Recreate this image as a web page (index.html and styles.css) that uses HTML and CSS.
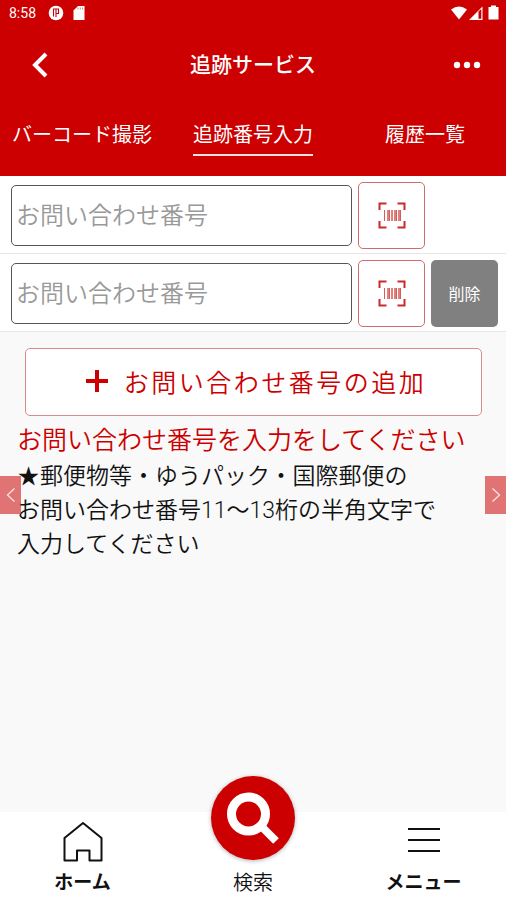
FILE: index.html
```html
<!DOCTYPE html>
<html lang="ja">
<head>
<meta charset="utf-8">
<meta name="viewport" content="width=device-width, initial-scale=1">
<title>追跡サービス</title>
<link rel="stylesheet" href="styles.css">
</head>
<body>
<header class="header">
  <div class="status">
    <span class="status-group">
      <span class="clock">8:58</span>
      <svg class="status-icon" width="16" height="16" viewBox="0 0 16 16" aria-hidden="true">
        <circle cx="8" cy="8" r="7.3" fill="#fff"/>
        <path d="M5.500 4V11.500M5 4H10.500V8.500H8M8 4V12" fill="none" stroke="#c00" stroke-width="1.100"/>
      </svg>
      <svg class="status-icon" width="16" height="16" viewBox="0 0 16 16" aria-hidden="true">
        <path d="M6 1H12.500V15H1.500V5.500Z" fill="#fff"/>
        <path d="M6 2.500V4.500M8.300 2.500V4.500M10.500 2.500V4.500" stroke="#c00" stroke-width=".5"/>
      </svg>
    </span>
    <svg width="48" height="16" viewBox="0 0 48 16" aria-hidden="true">
      <path d="M0 4.500Q8 -1.500 16 4.500L8 14.500Z" fill="#fff"/>
      <path d="M18 15L31.500 1.500V15Z" fill="#fff"/>
      <path d="M27.500 6.500L30.300 4V13.800H27.500Z" fill="#c00"/>
      <path d="M40 .5H45V2H47.500V14.500H37.500V2H40Z" fill="#fff"/>
    </svg>
  </div>
  <div class="titlebar">
    <button class="icon-button" type="button" aria-label="戻る">
      <svg width="18" height="26" viewBox="0 0 18 26" aria-hidden="true"><path d="M16 2L5 13L16 24" fill="none" stroke="#fff" stroke-width="4"/></svg>
    </button>
    <h1 class="title">追跡サービス</h1>
    <button class="icon-button" type="button" aria-label="その他">
      <svg width="28" height="8" viewBox="0 0 28 8" aria-hidden="true"><g fill="#fff"><circle cx="4" cy="4" r="3.200"/><circle cx="14" cy="4" r="3.200"/><circle cx="24" cy="4" r="3.200"/></g></svg>
    </button>
  </div>
  <nav class="tabs">
    <a class="tab" href="#barcode">バーコード撮影</a>
    <a class="tab tab-active" href="#number" aria-current="page">追跡番号入力</a>
    <a class="tab" href="#history">履歴一覧</a>
  </nav>
</header>
<main class="main">
  <form class="form">
    <div class="row">
      <input class="number" type="text" placeholder="お問い合わせ番号" aria-label="お問い合わせ番号">
      <button class="scan" type="button" aria-label="バーコードを読み取る">
        <svg width="28" height="27" viewBox="0 0 28 27" aria-hidden="true">
          <path d="M1.500 8V1.500H8.500M19.500 1.500H26.500V8M26.500 19V25.500H19.500M8.500 25.500H1.500V19" fill="none" stroke="#c92a2a" stroke-width="2"/>
          <path d="M6.500 8V19M11.500 8V19M18.500 8V19M22.500 8V19" stroke="#d65c5c" stroke-width="1"/>
          <path d="M10 8V19M14 8V19M17 8V19M21 8V19" stroke="#e08080" stroke-width="2"/>
        </svg>
      </button>
    </div>
    <div class="row">
      <input class="number" type="text" placeholder="お問い合わせ番号" aria-label="お問い合わせ番号">
      <button class="scan" type="button" aria-label="バーコードを読み取る">
        <svg width="28" height="27" viewBox="0 0 28 27" aria-hidden="true">
          <path d="M1.500 8V1.500H8.500M19.500 1.500H26.500V8M26.500 19V25.500H19.500M8.500 25.500H1.500V19" fill="none" stroke="#c92a2a" stroke-width="2"/>
          <path d="M6.500 8V19M11.500 8V19M18.500 8V19M22.500 8V19" stroke="#d65c5c" stroke-width="1"/>
          <path d="M10 8V19M14 8V19M17 8V19M21 8V19" stroke="#e08080" stroke-width="2"/>
        </svg>
      </button>
      <button class="delete" type="button">削除</button>
    </div>
    <button class="add" type="button">
      <svg width="24" height="24" viewBox="0 0 24 24" aria-hidden="true"><path d="M12 1V23M1 12H23" stroke="#c00" stroke-width="4"/></svg>
      <span class="add-label">お問い合わせ番号の追加</span>
    </button>
  </form>
  <p class="error">お問い合わせ番号を入力をしてください</p>
  <p class="hint"><span class="star">★</span>郵便物等・ゆうパック・国際郵便の<br>お問い合わせ番号11～13桁の半角文字で<br>入力してください</p>
  <button class="pager pager-prev" type="button" aria-label="前へ">
    <svg width="10" height="16" viewBox="0 0 10 16" aria-hidden="true"><path d="M8.500 1.500L1.500 8L8.500 14.500" fill="none" stroke="#fbe3e3" stroke-width="1.300"/></svg>
  </button>
  <button class="pager pager-next" type="button" aria-label="次へ">
    <svg width="10" height="16" viewBox="0 0 10 16" aria-hidden="true"><path d="M1.500 1.500L8.500 8L1.500 14.500" fill="none" stroke="#fbe3e3" stroke-width="1.300"/></svg>
  </button>
</main>
<nav class="bottom">
  <a class="item item-strong" href="#home">
    <svg width="42" height="42" viewBox="0 0 42 42" aria-hidden="true"><path d="M21 2L39.500 17V39.500H27.500V29.500H15V39.500H2.500V17Z" fill="none" stroke="#111" stroke-width="2" stroke-linejoin="round"/></svg>
    <span>ホーム</span>
  </a>
  <a class="item" href="#search">
    <svg class="search" width="86" height="86" viewBox="0 0 86 86" aria-hidden="true">
      <circle cx="43" cy="43" r="42" fill="#c00"/>
      <circle cx="38.500" cy="39" r="17" fill="none" stroke="#fff" stroke-width="9"/>
      <path d="M50 50L66 66" stroke="#fff" stroke-width="8"/>
    </svg>
    <span>検索</span>
  </a>
  <a class="item item-strong" href="#menu">
    <svg width="34" height="42" viewBox="0 0 34 42" aria-hidden="true"><path d="M1 8H33M1 19H33M1 30H33" stroke="#111" stroke-width="2"/></svg>
    <span>メニュー</span>
  </a>
</nav>
</body>
</html>
```
FILE: styles.css
```css
* {
  box-sizing: border-box;
}

body {
  margin: 0;
  min-height: 100vh;
  display: flex;
  flex-direction: column;
  background: #f9f9f9;
  color: #111;
  font-family: Roboto, "Noto Sans CJK JP", sans-serif;
}

button,
input {
  margin: 0;
  padding: 0;
  font-family: inherit;
}

button {
  display: flex;
  align-items: center;
  justify-content: center;
  border: 0;
  background: none;
}

a {
  color: inherit;
  text-decoration: none;
}

svg {
  display: block;
  flex: none;
}

.header {
  display: flex;
  flex-direction: column;
  background: #c00;
  color: #fff;
}

.status {
  height: 28px;
  padding: 0 7px 2px 9px;
  display: flex;
  align-items: center;
  justify-content: space-between;
}

.status-group {
  display: flex;
  align-items: center;
  gap: 8px;
}

.clock {
  margin-right: 4px;
  font-size: 14px;
}

.titlebar {
  height: 74px;
  padding: 0 12px;
  display: flex;
  align-items: center;
  justify-content: space-between;
}

.icon-button {
  width: 54px;
  height: 54px;
}

.title {
  margin: 0;
  font-size: 21px;
  line-height: 30px;
  font-weight: 500;
}

.tabs {
  padding: 18px 12px 20px;
  display: grid;
  grid-template-columns: 1fr auto 1fr;
  align-items: start;
}

.tab {
  justify-self: end;
  height: 36px;
  font-size: 20px;
  line-height: 30px;
}

.tab:first-child {
  justify-self: start;
}

.tab:last-child {
  margin-right: 29px;
}

.tab-active {
  border-bottom: 2px solid #fbdede;
}

.main {
  position: relative;
  flex: 1;
}

.row {
  padding: 6px 8px 4px 11px;
  display: grid;
  grid-template-columns: 1fr 67px 67px;
  gap: 6px;
  align-items: center;
  border-bottom: 1px solid #e6e6e6;
  background: #fff;
}

.number {
  width: 100%;
  min-width: 0;
  height: 61px;
  padding: 0 4px;
  border: 1px solid #555;
  border-radius: 5px;
  background: #fff;
  font-size: 24px;
  font-weight: 350;
}

.number::placeholder {
  color: #999;
  opacity: 1;
}

.scan,
.delete {
  height: 67px;
  border-radius: 5px;
}

.scan {
  border: 1px solid #d46a6a;
  background: #fff;
}

.delete {
  padding-bottom: 2px;
  background: #808080;
  color: #fff;
  font-size: 16px;
}

.add {
  width: calc(100% - 49px);
  height: 68px;
  margin: 16px auto 0;
  padding: 0 0 2px 5px;
  gap: 15px;
  border: 1px solid #d98a8a;
  border-radius: 5px;
  background: #fff;
  color: #c00;
  font-size: 25px;
  font-weight: 350;
}

.add-label {
  letter-spacing: 0.1em;
}

.error {
  margin: 6px 17px 0;
  color: #c00;
  font-size: 25px;
  font-weight: 350;
  line-height: 38px;
}

.hint {
  margin: 0 17px;
  font-size: 23px;
  font-weight: 350;
  line-height: 34px;
}

.star {
  font-family: "DejaVu Sans", sans-serif;
  line-height: 1;
}

.pager {
  position: absolute;
  top: 300px;
  width: 21px;
  height: 38px;
  background: rgba(214, 60, 60, 0.7);
}

.pager-prev {
  left: 0;
}

.pager-next {
  right: 0;
}

.bottom {
  height: 88px;
  padding-bottom: 2px;
  display: grid;
  grid-template-columns: 165px 1fr 165px;
  align-items: end;
  background: #fff;
}

.item {
  display: flex;
  flex-direction: column;
  align-items: center;
  gap: 5px;
  font-size: 20px;
  font-weight: 350;
  line-height: 30px;
}

.item-strong {
  font-size: 19px;
  font-weight: 700;
}

.item .search {
  margin: -50px 0 2px;
  filter: drop-shadow(0 1px 2px rgba(0, 0, 0, 0.3));
}
```
